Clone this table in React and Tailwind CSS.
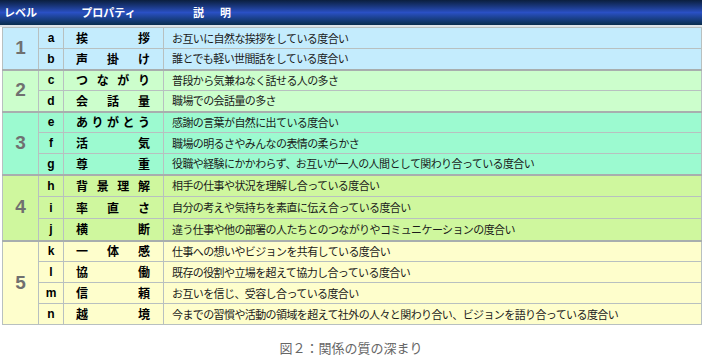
import React from "react";

const groups = [
  { level: "1", h: "h-[21px]", bg: "bg-[#c4ecfd]", rows: [["a", "挨拶", "お互いに自然な挨拶をしている度合い"], ["b", "声掛け", "誰とでも軽い世間話をしている度合い"]] },
  { level: "2", h: "h-[21px]", bg: "bg-[#ccfecc]", rows: [["c", "つながり", "普段から気兼ねなく話せる人の多さ"], ["d", "会話量", "職場での会話量の多さ"]] },
  { level: "3", h: "h-[21px]", bg: "bg-[#9cfad0]", rows: [["e", "ありがとう", "感謝の言葉が自然に出ている度合い"], ["f", "活気", "職場の明るさやみんなの表情の柔らかさ"], ["g", "尊重", "役職や経験にかかわらず、お互いが一人の人間として関わり合っている度合い"]] },
  { level: "4", h: "h-[22px]", bg: "bg-[#cff79e]", rows: [["h", "背景理解", "相手の仕事や状況を理解し合っている度合い"], ["i", "率直さ", "自分の考えや気持ちを素直に伝え合っている度合い"], ["j", "横断", "違う仕事や他の部署の人たちとのつながりやコミュニケーションの度合い"]] },
  { level: "5", h: "h-[21px]", bg: "bg-[#fefecc]", rows: [["k", "一体感", "仕事への想いやビジョンを共有している度合い"], ["l", "協働", "既存の役割や立場を超えて協力し合っている度合い"], ["m", "信頼", "お互いを信じ、受容し合っている度合い"], ["n", "越境", "今までの習慣や活動の領域を超えて社外の人々と関わり合い、ビジョンを語り合っている度合い"]] },
];

export default function App() {
  return (
    <div className="w-[705px] h-[357px] bg-white font-['Noto_Sans_CJK_JP',sans-serif]">
      <div className="w-[702px] h-[27px] flex items-center text-white font-bold text-[11px] bg-linear-to-b from-[#0b1f3f] via-[#2a50c4] to-[#0a2d4e] border-b-2 border-[#dde3e8]">
        <span className="pl-[4px] w-[66px]">レベル</span>
        <span className="w-[85px] text-center">プロパティ</span>
        <span className="pl-[42px] tracking-[16px]">説明</span>
      </div>
      <table className="ml-[2px] w-[700px] border-collapse border border-[#b4b4b4] table-fixed">
        <colgroup>
          <col className="w-[36px]" />
          <col className="w-[25px]" />
          <col className="w-[100px]" />
          <col />
        </colgroup>
        <tbody>
          {groups.map((g, gi) =>
            g.rows.map((r, ri) => {
              const top = ri === 0 && gi > 0 ? "border-t-2 border-t-[#a8aeae]" : "";
              return (
                <tr key={r[0]} className={g.bg}>
                  {ri === 0 && (
                    <td rowSpan={g.rows.length} className={`border border-[#b8c0c0] ${top} text-center align-middle font-['Liberation_Sans',sans-serif] font-bold text-[19px] text-[#707070]`}>
                      {g.level}
                    </td>
                  )}
                  <td className={`${g.h} p-0 border border-[#b8c0c0] ${top} text-center font-['Liberation_Sans',sans-serif] font-bold text-[12px] text-black leading-none`}>
                    {r[0]}
                  </td>
                  <td className={`${g.h} py-0 pl-[12px] pr-[13px] border border-[#b8c0c0] ${top} font-bold text-[12px] text-black leading-none text-justify [text-align-last:justify]`}>
                    {r[1]}
                  </td>
                  <td className={`${g.h} py-0 pl-[8px] border border-[#b8c0c0] ${top} text-[11px] tracking-[-0.6px] text-[#1a1a1a] leading-none whitespace-nowrap`}>
                    {r[2]}
                  </td>
                </tr>
              );
            })
          )}
        </tbody>
      </table>
      <div className="w-[702px] mt-[16px] text-center text-[13px] text-[#666] leading-none">図２：関係の質の深まり</div>
    </div>
  );
}
